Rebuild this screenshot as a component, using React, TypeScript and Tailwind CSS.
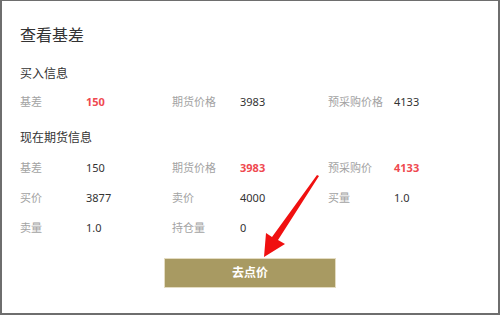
import React from "react";

type Cell = { label: string; value: string; hot?: boolean };

const buyRows: Cell[][] = [
  [
    { label: "基差", value: "150", hot: true },
    { label: "期货价格", value: "3983" },
    { label: "预采购价格", value: "4133" },
  ],
];

const nowRows: Cell[][] = [
  [
    { label: "基差", value: "150" },
    { label: "期货价格", value: "3983", hot: true },
    { label: "预采购价", value: "4133", hot: true },
  ],
  [
    { label: "买价", value: "3877" },
    { label: "卖价", value: "4000" },
    { label: "买量", value: "1.0" },
  ],
  [
    { label: "卖量", value: "1.0" },
    { label: "持仓量", value: "0" },
  ],
];

function InfoRow({ cells }: { cells: Cell[] }) {
  return (
    <div className="grid h-[30px] grid-cols-[66px_86px_68px_88px_66px_1fr] items-center text-[11px] leading-4">
      {cells.map((c) => (
        <React.Fragment key={c.label}>
          <span className="text-[#a3a3a3]">{c.label}</span>
          <span className={c.hot ? "font-bold text-[#ef4950]" : "text-[#333]"}>{c.value}</span>
        </React.Fragment>
      ))}
    </div>
  );
}

export default function App() {
  return (
    <div
      className="relative h-[315px] w-[500px] overflow-hidden border-t border-r-2 border-b-2 border-l-2 border-[#6e6e6e] bg-white"
      style={{ fontFamily: '"Noto Sans", "Noto Sans CJK SC", sans-serif' }}
    >
      <div className="pl-[18px]">
        <h1 className="mt-[23px] text-[16px] leading-[22px] text-[#333]">查看基差</h1>

        {/* 买入信息 */}
        <p className="mt-[20px] text-[12px] leading-4 text-[#333]">买入信息</p>
        <div className="mt-[5px]">
          {buyRows.map((r, i) => (
            <InfoRow key={i} cells={r} />
          ))}
        </div>

        {/* 现在期货信息 */}
        <p className="mt-[13px] text-[12px] leading-4 text-[#333]">现在期货信息</p>
        <div className="mt-[7px]">
          {nowRows.map((r, i) => (
            <InfoRow key={i} cells={r} />
          ))}
        </div>
      </div>

      <div className="mt-[15px] flex justify-center">
        <button className="h-[30px] w-[172px] border border-[#e4dcc2] bg-[#a89a62] text-[12px] font-bold text-white">
          去点价
        </button>
      </div>

      {/* red arrow annotation */}
      <svg className="pointer-events-none absolute left-0 top-0" width="500" height="316" viewBox="0 0 500 316">
        <polygon
          points="317,175 276,239 283,243 262,256 264,232 270,236 315,174"
          fill="#f01010"
        />
      </svg>
    </div>
  );
}
